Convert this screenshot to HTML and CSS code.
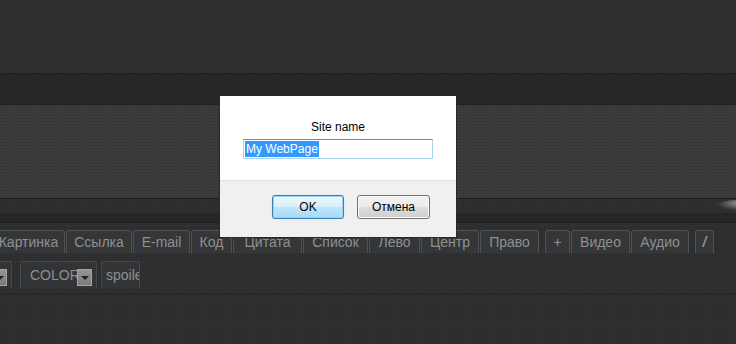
FILE: index.html
```html
<!DOCTYPE html>
<html lang="ru">
<head>
  <meta charset="UTF-8" />
  <meta name="viewport" content="width=device-width, initial-scale=1.0" />
  <title>Site name</title>
  <link rel="stylesheet" href="styles.css">
</head>
<body>
  <div class="header"></div>
  <div class="nav"></div>
  <div class="banner"></div>
  <div class="strip">
    <div class="strip-top"><span class="gleam"></span></div>
    <div class="strip-bottom"></div>
  </div>

  <div class="toolbar">
    <div class="tabs">
      <span class="tab">Картинка</span>
      <span class="tab">Ссылка</span>
      <span class="tab">E-mail</span>
      <span class="tab">Код</span>
      <span class="tab">Цитата</span>
      <span class="tab">Список</span>
      <span class="tab">Лево</span>
      <span class="tab">Центр</span>
      <span class="tab">Право</span>
      <span class="tab group">+</span>
      <span class="tab">Видео</span>
      <span class="tab">Аудио</span>
      <span class="tab group italic">/</span>
    </div>
    <div class="controls">
      <span class="select first-select"><span class="arrow"></span></span>
      <span class="select color-select">COLOR<span class="arrow"></span></span>
      <span class="spoiler">spoile</span>
    </div>
  </div>

  <div class="footer"></div>

  <div class="dialog">
    <div class="dialog-body">
      <label class="dialog-label">Site name</label>
      <div class="dialog-input"><span class="selected">My WebPage</span></div>
    </div>
    <div class="dialog-footer">
      <button class="btn btn-ok">OK</button>
      <button class="btn">Отмена</button>
    </div>
  </div>
</body>
</html>
```

FILE: styles.css
```css
body {
  margin: 0;
  font-family: 'Liberation Sans', Arial, sans-serif;
  background-color: #2e2f31;
  overflow: hidden;
}

.header,
.nav,
.banner,
.strip-top,
.toolbar,
.footer {
  background-image: radial-gradient(rgba(0, 0, 0, 0.18) 0.8px, transparent 1px);
  background-size: 3px 3px;
}

.header {
  height: 73px;
  background-color: #2f3032;
}

.nav {
  height: 30px;
  background-color: #27282a;
  border-top: 1px solid #1e1f21;
}

.banner {
  height: 93px;
  background-color: #3a3b3d;
  border-top: 1px solid #1f2022;
}

.strip {
  border-top: 1px solid #1d1e20;
  border-bottom: 1px solid #1e1f21;
}

.strip-top {
  position: relative;
  height: 14px;
  background-color: #2e2f31;
}

.gleam {
  position: absolute;
  right: -14px;
  top: 1px;
  width: 34px;
  height: 11px;
  border-radius: 70% 30% 50% 50%;
  background: radial-gradient(ellipse at 70% 30%, rgba(200, 200, 200, 0.7), rgba(130, 130, 130, 0.3) 50%, transparent 70%);
}

.strip-bottom {
  height: 9px;
  background-color: #252628;
}

.toolbar {
  height: 71px;
  padding-top: 7px;
  box-sizing: border-box;
  background-color: #2f3032;
  border-bottom: 1px solid #242527;
}

.tabs {
  display: grid;
  grid-template-columns: 74px 67px 58px 42px 70px 66px 52px 59px 60px 31px 60px 59px 25px;
  height: 23px;
  margin-left: -8px;
  white-space: nowrap;
}

.tab {
  height: 23px;
  line-height: 23px;
  margin-right: 1px;
  box-sizing: border-box;
  font-size: 14px;
  text-align: center;
  color: #8d9094;
  background-color: #353638;
  border: 1px solid #505153;
  border-bottom: none;
  border-radius: 3px 3px 0 0;
}

.tab.group {
  margin-left: 5px;
}

.tab.italic {
  font-style: italic;
  font-weight: bold;
}

.controls {
  display: flex;
  gap: 4px;
  margin-top: 8px;
  height: 27px;
}

.select,
.spoiler {
  position: relative;
  height: 27px;
  line-height: 27px;
  box-sizing: border-box;
  font-size: 14px;
  color: #8d9094;
  background-color: #333436;
  border: 1px solid #48494b;
  border-bottom: none;
  border-radius: 3px 3px 0 0;
  overflow: hidden;
}

.first-select {
  width: 16px;
  margin-left: -4px;
}

.color-select {
  width: 77px;
  margin-left: 4px;
  padding-left: 9px;
}

.spoiler {
  width: 39px;
  padding-left: 4px;
  white-space: nowrap;
}

.arrow {
  position: absolute;
  top: 7px;
  right: 4px;
  width: 15px;
  height: 17px;
  box-sizing: border-box;
  background: linear-gradient(#959595, #7a7a7a);
  border: 1px solid #a3a3a3;
}

.arrow::after {
  content: "";
  position: absolute;
  left: 3px;
  top: 6px;
  border-left: 4px solid transparent;
  border-right: 4px solid transparent;
  border-top: 4px solid #222;
}

.footer {
  height: 60px;
  background-color: #2e2f31;
}

.dialog {
  position: absolute;
  left: 219px;
  top: 95px;
  width: 238px;
  height: 143px;
  box-sizing: border-box;
  border: 1px solid #2a2a2a;
  background-color: #f0f0f0;
  font-size: 12px;
  color: #000;
}

.dialog-body {
  height: 85px;
  background-color: #fff;
  border-bottom: 1px solid #dfdfdf;
  display: flex;
  flex-direction: column;
  align-items: center;
  box-sizing: border-box;
  padding-top: 24px;
}

.dialog-label {
  line-height: 14px;
}

.dialog-input {
  margin-top: 5px;
  width: 190px;
  height: 20px;
  box-sizing: border-box;
  border: 1px solid #abd2ee;
  border-top-color: #5b8fbd;
  padding: 1px 1px;
  text-align: left;
}

.selected {
  display: inline-block;
  height: 16px;
  line-height: 16px;
  padding: 0 1px;
  background-color: #3399ff;
  color: #fff;
}

.dialog-footer {
  display: flex;
  gap: 13px;
  padding: 14px 0 0 52px;
}

.btn {
  width: 73px;
  height: 24px;
  padding: 0;
  font-family: 'Liberation Sans', Arial, sans-serif;
  font-size: 12px;
  color: #000;
  border: 1px solid #707070;
  border-radius: 3px;
  background: linear-gradient(#f2f2f2 0%, #ebebeb 50%, #dddddd 51%, #cfcfcf 100%);
  box-shadow: inset 0 0 0 1px #fcfcfc;
}

.btn-ok {
  width: 72px;
  border-color: #3c7fb1;
  background: linear-gradient(#eaf6fd 0%, #d9f0fc 50%, #bee6fd 51%, #a7d9f5 100%);
  box-shadow: inset 0 0 0 1px #9ed2f0, 0 0 1px #6cc2ee;
}
```
